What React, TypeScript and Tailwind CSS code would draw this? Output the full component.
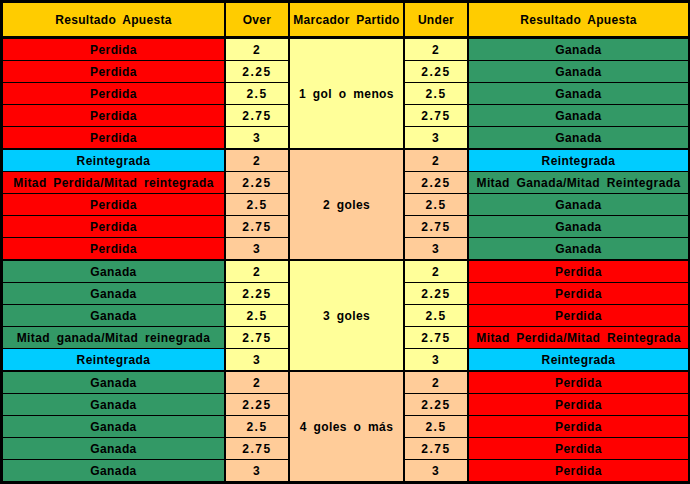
import React from "react";

const RED = "bg-[#ff0000]";
const GREEN = "bg-[#339966]";
const CYAN = "bg-[#00ccff]";
const LY = "bg-[#ffff99]";
const PEACH = "bg-[#ffcc99]";

type Cell = { t: string; c: string };
const P: Cell = { t: "Perdida", c: RED };
const G: Cell = { t: "Ganada", c: GREEN };
const R: Cell = { t: "Reintegrada", c: CYAN };

const groups: { m: string; bg: string; left: Cell[]; right: Cell[] }[] = [
  { m: "1 gol o menos", bg: LY, left: [P, P, P, P, P], right: [G, G, G, G, G] },
  {
    m: "2 goles",
    bg: PEACH,
    left: [R, { t: "Mitad Perdida/Mitad reintegrada", c: RED }, P, P, P],
    right: [R, { t: "Mitad Ganada/Mitad Reintegrada", c: GREEN }, G, G, G],
  },
  {
    m: "3 goles",
    bg: LY,
    left: [G, G, G, { t: "Mitad ganada/Mitad reinegrada", c: GREEN }, R],
    right: [P, P, P, { t: "Mitad Perdida/Mitad Reintegrada", c: RED }, R],
  },
  { m: "4 goles o más", bg: PEACH, left: [G, G, G, G, G], right: [P, P, P, P, P] },
];

const vals = ["2", "2.25", "2.5", "2.75", "3"];

function Col({ cells, w }: { cells: Cell[]; w: string }) {
  return (
    <div className={`flex flex-col gap-[1px] ${w}`}>
      {cells.map((c, i) => (
        <div key={i} className={`h-[21px] flex items-center justify-center whitespace-nowrap ${c.c}`}>
          {c.t}
        </div>
      ))}
    </div>
  );
}

export default function App() {
  return (
    <div
      className="w-[690px] h-[484px] bg-black pt-[3px] pl-[3px] pr-[2px] pb-[3px] flex flex-col text-[12px] font-bold text-black"
      style={{ fontFamily: '"Liberation Sans", Arial, sans-serif' }}
    >
      <div className="flex gap-[2px] h-[33px] tracking-[0.3px] [word-spacing:3px]">
        <div className="w-[221px] flex items-center justify-center bg-[#ffcc00]">Resultado Apuesta</div>
        <div className="w-[62px] flex items-center justify-center bg-[#ffcc00]">Over</div>
        <div className="w-[113px] flex items-center justify-center bg-[#ffcc00] whitespace-nowrap">Marcador Partido</div>
        <div className="w-[62px] flex items-center justify-center bg-[#ffcc00]">Under</div>
        <div className="w-[219px] flex items-center justify-center bg-[#ffcc00]">Resultado Apuesta</div>
      </div>
      <div className="mt-[3px] flex flex-col gap-[2px] tracking-[0.4px] [word-spacing:3px]">
        {groups.map((g, gi) => (
          <div key={gi} className="flex gap-[2px] h-[109px]">
            <Col cells={g.left} w="w-[221px]" />
            <Col cells={vals.map((v) => ({ t: v, c: g.bg }))} w="w-[62px] tracking-[1.5px]" />
            <div className={`w-[113px] flex items-center justify-center ${g.bg}`}>{g.m}</div>
            <Col cells={vals.map((v) => ({ t: v, c: g.bg }))} w="w-[62px] tracking-[1.5px]" />
            <Col cells={g.right} w="w-[219px]" />
          </div>
        ))}
      </div>
    </div>
  );
}
